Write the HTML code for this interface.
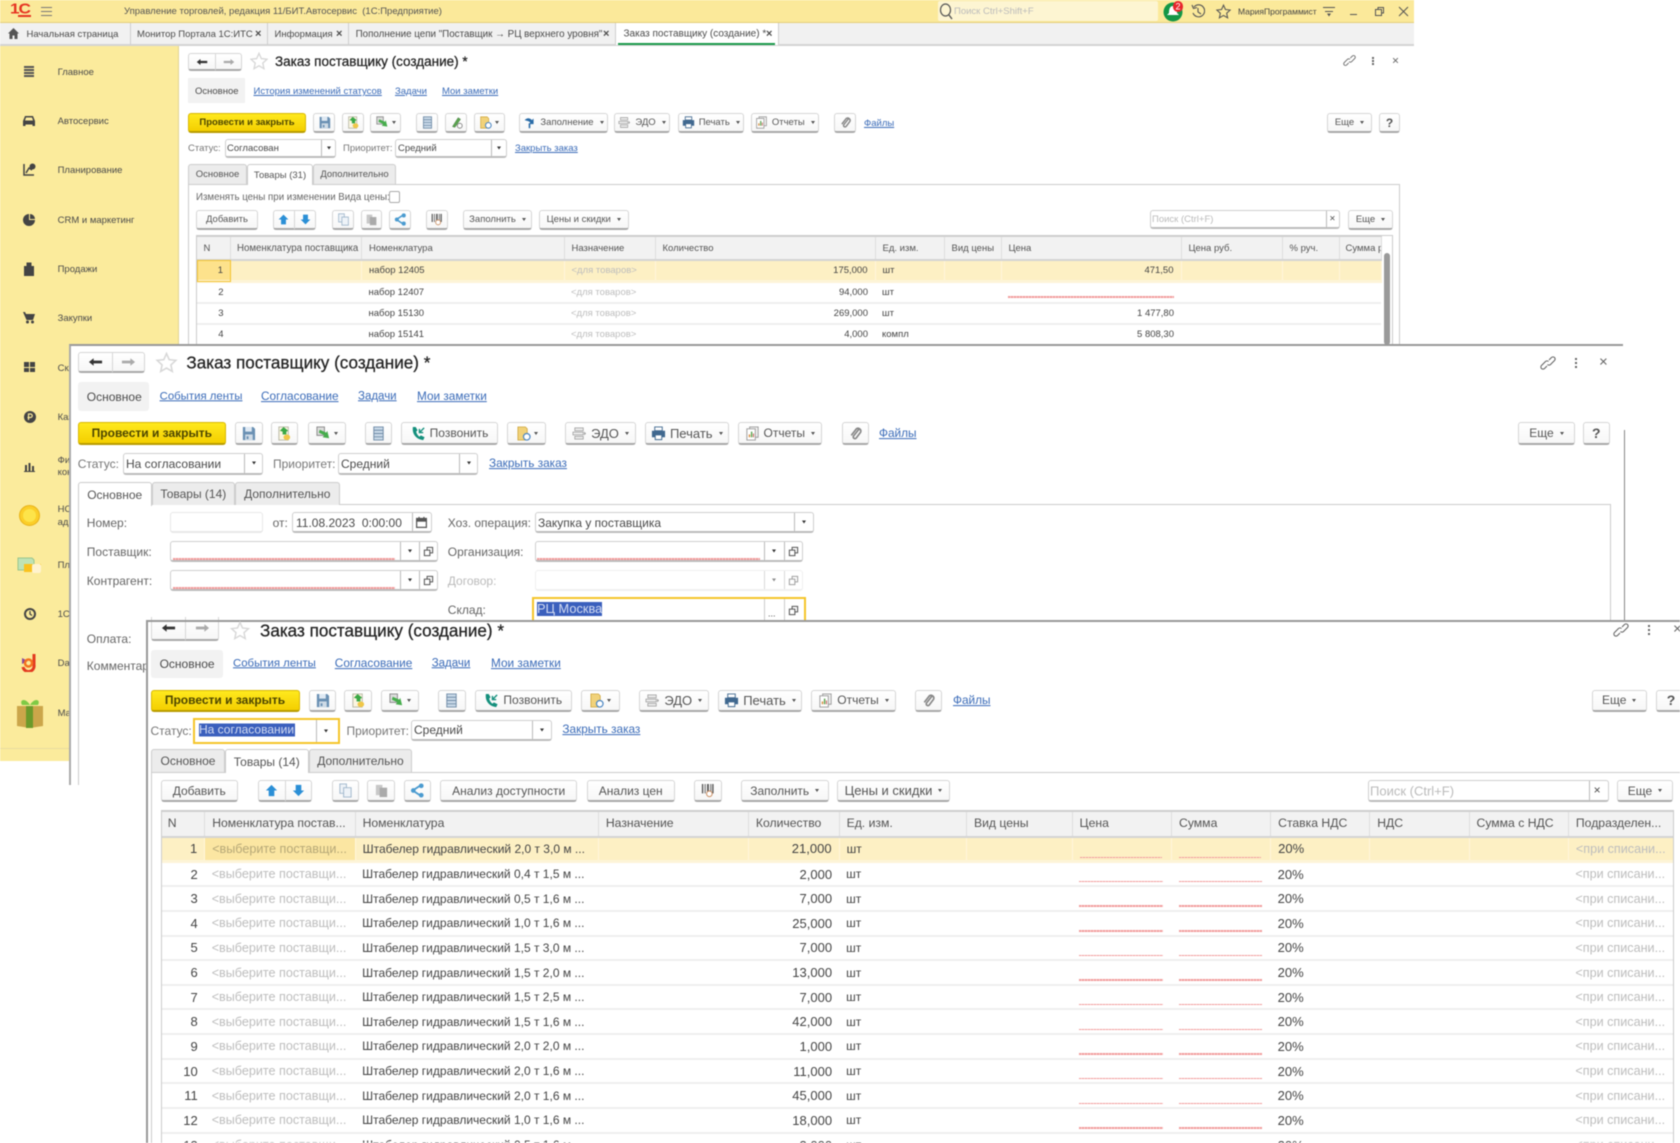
<!DOCTYPE html>
<html lang="ru"><head><meta charset="utf-8"><title>Заказ поставщику</title>
<style>
html,body{margin:0;padding:0;background:#fff}
body{width:1680px;height:1143px;overflow:hidden;position:relative;font-family:"Liberation Sans",Arial,sans-serif;color:#4b4b4b}
#p{position:absolute;left:0;top:0;width:1680px;height:1143px;overflow:hidden;filter:blur(.4px)}
.f1{font-size:9.5px}.f2,.f3{font-size:12px}
.x{position:absolute}
.t{position:absolute;white-space:nowrap;line-height:1;transform:translateY(-50%)}
.f1 .t{transform:translateY(calc(-50% + .7px))}
.l{color:#3a6bb8;text-decoration:underline}
.f2 .l,.f3 .l{font-size:11.8px}
.b{position:absolute;box-sizing:border-box;display:flex;align-items:center;justify-content:center;gap:4px;white-space:nowrap;background:linear-gradient(#fff,#f7f7f7);border:1px solid #d6d6d6;border-bottom:2px solid #a9a9a9;border-radius:3px;color:#555}
.y{background:linear-gradient(#ffe91e,#f4cf00);border-color:#d9b800;border-bottom-color:#b89c00;font-weight:bold;color:#4c4500}
.a{display:inline-block;width:0;height:0;border:2.5px solid transparent;border-top:3px solid #555;border-bottom:0;margin-left:2px}
.b svg{width:15px;height:15px;flex:none}
.f1 .b svg{width:13px;height:13px}
.n{position:absolute;box-sizing:border-box;background:#f2f2f2}
.g{position:absolute;box-sizing:border-box;display:flex;align-items:center;justify-content:center;white-space:nowrap}
.tg{background:#ececec;border:1px solid #ccc;border-bottom:0;border-radius:3px 3px 0 0;color:#555}
.tw{background:#fff;border:1px solid #ccc;border-bottom:0;border-radius:3px 3px 0 0;z-index:2;color:#555}
.i{position:absolute;box-sizing:border-box;background:#fff;border:1px solid #cfcfcf;border-bottom:2px solid #bdbdbd;border-radius:3px}
.s{position:absolute;top:0;bottom:0;width:1px;background:#bbb}
.o{position:absolute;width:0;height:0;border:2.5px solid transparent;border-top:3.5px solid #333;border-bottom:0;transform:translate(-50%,-50%);top:50%}
.rl{position:absolute;height:1.500px;background:repeating-linear-gradient(90deg,#f09a9a 0 2px,#f8c4c4 2px 3px)}
.w{left:7px;right:9px;bottom:3px}
.u .w{bottom:2px}
table{position:absolute;border-collapse:collapse;table-layout:fixed;color:#444}
td,th{padding:0 0 0 7px;overflow:hidden;white-space:nowrap;position:relative;box-sizing:border-box;font-weight:normal;text-align:left}
th{background:#f2f2f2;border-right:1px solid #ddd;border-bottom:2px solid #d4d4d4;border-top:2px solid #d0d0d0;color:#555}
.f3 th{padding-bottom:2px;font-size:12.200px}
td{border-bottom:2px solid #efefef}
.u td{background:#fdf0c4;border-right:1px solid #fff6dc;border-bottom:3px solid #fdf4d8}
td.q,td.m{text-align:right;padding:0 7px 0 0}
td.h{color:#bdbdbd}
.f3 td.h{font-size:12.600px}
.f3 td.q,.f3 td.m,.f3 td.p{font-size:13px}
.ic{position:absolute}
</style></head><body>
<svg width="0" height="0" style="position:absolute">
<symbol id="save" viewBox="0 0 16 16"><path d="M2 1h11l2 2v12H2z" fill="#6a90b3"/><path d="M4.500 1h7v5h-7z" fill="#dfe9f3"/><path d="M4.500 9h8v6h-8z" fill="#cfdbe6"/><path d="M6 11h2v3H6z" fill="#6a90b3"/></symbol>
<symbol id="doc" viewBox="0 0 16 16"><path d="M2 1h10v14H2z" fill="#fbf5e0" stroke="#b7b7a5"/><path d="M7 1l5 4-2 1v3H6V6L3 5z" fill="#39a845"/><ellipse cx="10.500" cy="12" rx="3.500" ry="3" fill="#f0c748"/></symbol>
<symbol id="gr" viewBox="0 0 16 16"><path d="M1 1h8v9H1z" fill="#dcdcdc" stroke="#888"/><path d="M4 4l7 3 1-2 2 8-7-1 2-2-6-3z" fill="#46ad4c"/></symbol>
<symbol id="list" viewBox="0 0 16 16"><path d="M3 1h10v14H3z" fill="#c9d9e8" stroke="#6f8ba6"/><path d="M3 4.500h10M3 8h10M3 11.500h10" stroke="#6f8ba6"/></symbol>
<symbol id="pen" viewBox="0 0 16 16"><path d="M3 13L10 2l3 2-7 10z" fill="#5aa34f" stroke="#3a6b35" stroke-width=".5"/><circle cx="12" cy="12" r="3" fill="#fff" stroke="#777"/></symbol>
<symbol id="dc" viewBox="0 0 16 16"><path d="M2 1h8l2 2v12H2z" fill="#f1d27a" stroke="#c69b2a" stroke-width=".7"/><circle cx="11.500" cy="11.500" r="3.500" fill="#fff" stroke="#4d87c2" stroke-width="1.300"/></symbol>
<symbol id="edo" viewBox="0 0 16 16"><path d="M3 2h9v3H3zM1 6.500h11v3H1zM3 11h9v3H3z" fill="#ececec" stroke="#9a9a9a" stroke-width=".8"/><path d="M13 6l2 2-2 2z" fill="#999"/></symbol>
<symbol id="prn" viewBox="0 0 16 16"><path d="M4 1h8v4H4z" fill="#fff" stroke="#40688f"/><path d="M1 5h14v7h-3v3H4v-3H1z" fill="#40688f"/><path d="M5 10h6v4H5z" fill="#fff"/></symbol>
<symbol id="rep" viewBox="0 0 16 16"><path d="M5 1h9v11H5z" fill="#f4f4f4" stroke="#999"/><path d="M2 3h9v12H2z" fill="#fff" stroke="#999"/><path d="M4 12V9h1.500v3z" fill="#d88a3a"/><path d="M6.300 12V6h1.500v6z" fill="#5aa34f"/><path d="M8.500 12V8h1v4z" fill="#c2534e"/></symbol>
<symbol id="clip" viewBox="0 0 16 16"><path d="M12 3L6 10.500a1.800 1.800 0 0 0 2.800 2.300L13.500 6.500A3 3 0 0 0 9 3L3.500 10" fill="none" stroke="#888" stroke-width="1.800"/></symbol>
<symbol id="fill" viewBox="0 0 16 16"><path d="M2 5c3-3 6-3 9 0l2-2v7H7l2-2C7 6 5 6 2 5z" fill="#2a6ca8"/><path d="M8 9v6" stroke="#2a6ca8" stroke-width="2"/></symbol>
<symbol id="ph" viewBox="0 0 16 16"><path d="M2 1c-1 7 3 13 11 14l1.500-3-4-2-1.500 1.500C7 10 6 8 5.500 6L7 4.500 5 1z" fill="#15907d"/><path d="M9 7l5-5M9 3v4h4" fill="none" stroke="#15907d" stroke-width="1.500"/></symbol>
<symbol id="up" viewBox="0 0 16 16"><path d="M8 2l6 6h-3v6H5V8H2z" fill="#2b8fd6"/></symbol>
<symbol id="dn" viewBox="0 0 16 16"><path d="M8 14l6-6h-3V2H5v6H2z" fill="#2b8fd6"/></symbol>
<symbol id="cp" viewBox="0 0 16 16"><path d="M2 1h7v10H2z" fill="#eef3f8" stroke="#9fb6cb"/><path d="M6 5h8v10H6z" fill="#eef3f8" stroke="#9fb6cb"/></symbol>
<symbol id="ps" viewBox="0 0 16 16"><path d="M2 2h7v11H2z" fill="#c8c8c8"/><path d="M6 5h8v10H6z" fill="#aaa"/></symbol>
<symbol id="sh" viewBox="0 0 16 16"><path d="M12 2L3 8l9 6" fill="none" stroke="#4b9bd0" stroke-width="2"/><circle cx="12" cy="3" r="2.500" fill="#4b9bd0"/><circle cx="3.500" cy="8" r="2.500" fill="#4b9bd0"/><circle cx="12" cy="13" r="2.500" fill="#4b9bd0"/></symbol>
<symbol id="bc" viewBox="0 0 16 16"><path d="M2 1h1.500v10H2zM5 1h1v10H5zM7.500 1h2v10h-2zM11 1h1v10h-1zM13 1h1.500v10H13z" fill="#5a5a5a"/><circle cx="10" cy="11.500" r="3" fill="#fff" stroke="#c98a5c"/></symbol>
<symbol id="ln" viewBox="0 0 16 16"><path d="M9 5l2.500-2.500a2.100 2.100 0 0 1 3 3L10.500 9.500a2.100 2.100 0 0 1-3 0M7 11l-2.500 2.500a2.100 2.100 0 0 1-3-3L5.500 6.500a2.100 2.100 0 0 1 3 0" fill="none" stroke="#666" stroke-width="1.100"/></symbol>
<symbol id="st" viewBox="0 0 20 20"><path d="M10 1.500l2.600 5.800 6.300.7-4.700 4.300 1.300 6.200L10 15.300l-5.500 3.200 1.300-6.200L1.100 8l6.300-.7z" fill="#fff" stroke="#d8d8d8" stroke-width="1.500"/></symbol>
<symbol id="bk" viewBox="0 0 16 10"><path d="M1 5l5-4v2.500h9v3H6V9z" fill="currentColor"/></symbol>
<symbol id="fw" viewBox="0 0 16 10"><path d="M15 5l-5-4v2.500H1v3h9V9z" fill="currentColor"/></symbol>
<symbol id="ow" viewBox="0 0 16 16"><path d="M6 2h8v8H6z" fill="none" stroke="#555" stroke-width="1.500"/><path d="M2 6h8v8H2z" fill="#fff" stroke="#555" stroke-width="1.500"/></symbol>
<symbol id="cal" viewBox="0 0 16 16"><path d="M2 3h12v11H2z" fill="#fff" stroke="#555" stroke-width="1.500"/><path d="M2 3h12v4H2z" fill="#555"/><path d="M5 1v3M11 1v3" stroke="#555" stroke-width="1.500"/></symbol>
</svg>
<div id="p">

<!-- WINDOW 1 -->
<div class="f1">
<div class="x" style="left:0;top:0;width:1414px;height:23px;background:#fbe99a;border-bottom:1px solid #e4cf7a;box-sizing:border-box"></div>
<span class="t" style="left:10px;top:8.500px;color:#e63422;font:bold 15px 'Liberation Sans',sans-serif;letter-spacing:-1px;transform:translateY(-50%) scaleX(1.15);transform-origin:left">1С</span>
<div class="x" style="left:18px;top:14.500px;width:13px;height:2px;background:#e63422"></div>
<div class="x" style="left:41px;top:7px;width:11px;height:9px;border-top:1px solid #777;border-bottom:1px solid #777;box-sizing:border-box"></div><div class="x" style="left:41px;top:11px;width:11px;height:1px;background:#777"></div>
<span class="t" style="left:124px;top:10.500px;color:#555">Управление торговлей, редакция 11/БИТ.Автосервис &nbsp;(1С:Предприятие)</span>
<div class="x" style="left:938px;top:1px;width:220px;height:20px;background:#fdf5d2;border-radius:2px"></div>
<svg class="ic" style="left:939px;top:3px" width="14" height="17" viewBox="0 0 14 17"><ellipse cx="6.500" cy="7" rx="5" ry="6" fill="none" stroke="#555" stroke-width="1.200"/><path d="M10 12l3 4" stroke="#555" stroke-width="1.400"/></svg>
<span class="t" style="left:954px;top:10.500px;color:#bbb">Поиск Ctrl+Shift+F</span>
<svg class="ic" style="left:1163px;top:0" width="22" height="22" viewBox="0 0 22 22"><circle cx="10" cy="12" r="9.500" fill="#149746"/><path d="M10 6c3 0 4 3 4 7l2 2H4l2-2c0-4 1-7 4-7z" fill="#fff"/><rect x="10" y="1" width="10" height="11" rx="5" fill="#e8262c"/><text x="15" y="9.500" font-size="9" fill="#fff" text-anchor="middle" font-family="Liberation Sans">2</text></svg>
<svg class="ic" style="left:1191px;top:4px" width="14" height="15" viewBox="0 0 14 15"><path d="M3 3a6 6 0 1 1-1 6M1 1l1.500 3.500L6 3.500M7 4v4l3 2" fill="none" stroke="#555" stroke-width="1.100"/></svg>
<svg class="ic" style="left:1216px;top:4px" width="15" height="15" viewBox="0 0 20 20"><path d="M10 1.500l2.600 5.800 6.300.7-4.700 4.300 1.300 6.200L10 15.300l-5.500 3.200 1.300-6.200L1.100 8l6.300-.7z" fill="none" stroke="#555" stroke-width="1.400"/></svg>
<span class="t" style="left:1238px;top:10.500px;font-size:8.500px;color:#444">МарияПрограммист</span>
<div class="x" style="left:1323px;top:7px;width:12px;height:1px;background:#555"></div><div class="x" style="left:1325px;top:11px;width:8px;height:1px;background:#555"></div><div class="o" style="left:1329px;top:15px;border-top-color:#555"></div>
<div class="x" style="left:1350px;top:14px;width:7px;height:1px;background:#555"></div>
<svg class="ic" style="left:1375px;top:7px" width="9" height="9" viewBox="0 0 9 9"><path d="M3 2V.5h5.500V6H7M.5 2.500H6.500V8.500H.5z" fill="none" stroke="#555"/></svg>
<svg class="ic" style="left:1398px;top:6px" width="11" height="11" viewBox="0 0 11 11"><path d="M1 1l9 9M10 1l-9 9" stroke="#555" stroke-width="1"/></svg>

<div class="x" style="left:0;top:23px;width:1414px;height:23px;background:#f1f1f1;border-bottom:2px solid #d4d4d4;box-sizing:border-box"></div>
<div class="x" style="left:615px;top:23px;width:163px;height:22px;background:#fff"></div>
<div class="x" style="left:618px;top:43px;width:157px;height:2px;background:#1b9a4b"></div>
<div class="x" style="left:130px;top:23px;width:1px;height:22px;background:#cfcfcf"></div>
<div class="x" style="left:267px;top:23px;width:1px;height:22px;background:#cfcfcf"></div>
<div class="x" style="left:348px;top:23px;width:1px;height:22px;background:#cfcfcf"></div>
<div class="x" style="left:615px;top:23px;width:1px;height:22px;background:#cfcfcf"></div>
<div class="x" style="left:778px;top:23px;width:1px;height:22px;background:#cfcfcf"></div>
<svg class="ic" style="left:8px;top:28px" width="11" height="11" viewBox="0 0 11 11"><path d="M5.500 0L11 5.500H9.500V11H6.500V7.500h-2V11H1.500V5.500H0z" fill="#555"/></svg>
<span class="t" style="left:26.500px;top:33.500px">Начальная страница</span>
<span class="t" style="left:137px;top:33.500px">Монитор Портала 1С:ИТС</span><span class="t" style="left:255px;top:33.500px;font-weight:bold;font-size:11px">×</span>
<span class="t" style="left:274.500px;top:33.500px">Информация</span><span class="t" style="left:336px;top:33.500px;font-weight:bold;font-size:11px">×</span>
<span class="t" style="left:355.600px;top:33.500px;font-size:9.800px">Пополнение цепи "Поставщик → РЦ верхнего уровня"</span><span class="t" style="left:603px;top:33.500px;font-weight:bold;font-size:11px">×</span>
<span class="t" style="left:623.500px;top:33.500px;font-size:10px">Заказ поставщику (создание) *</span><span class="t" style="left:766px;top:33.500px;font-weight:bold;font-size:11px">×</span>

<div class="x" style="left:0;top:46px;width:178px;height:715px;background:#fbeb9c;border-right:1px solid #e2d596"></div>
<div class="x" style="left:0;top:748px;width:178px;height:1px;background:#e9dca0"></div>

<div class="x" style="left:24px;top:66px;width:10px;height:2px;background:#555;box-shadow:0 3px 0 #555,0 6px 0 #555,0 9px 0 #555"></div>
<svg class="ic" style="left:23px;top:115px" width="12" height="12" viewBox="0 0 12 12"><path d="M2 1h8l2 5v5H9.500V9.500h-7V11H0V6z" fill="#444"/><path d="M3 2.500h6l1 3H2z" fill="#fbeb9c"/></svg>
<svg class="ic" style="left:23px;top:163px" width="13" height="14" viewBox="0 0 13 14"><path d="M1 1v11h10M3 10l3-5 3 2" fill="none" stroke="#444" stroke-width="1.500"/><circle cx="9.500" cy="3.500" r="3" fill="#444"/></svg>
<svg class="ic" style="left:23px;top:214px" width="12" height="12" viewBox="0 0 12 12"><path d="M6 0a6 6 0 1 0 6 6H6z" fill="#444"/><path d="M7 0v5h5a5 5 0 0 0-5-5z" fill="#444"/></svg>
<svg class="ic" style="left:24px;top:262px" width="10" height="14" viewBox="0 0 10 14"><path d="M0 4h10v10H0zM3 4V1h4v3" fill="#444"/><path d="M3 4V1h4v3" fill="none" stroke="#444"/></svg>
<svg class="ic" style="left:23px;top:312px" width="12" height="12" viewBox="0 0 12 12"><path d="M0 0h2l1 2h9l-2 6H3.500zM3 10a1.500 1.500 0 1 0 3 0 1.500 1.500 0 0 0-3 0zM8 10a1.500 1.500 0 1 0 3 0 1.500 1.500 0 0 0-3 0z" fill="#444"/></svg>
<svg class="ic" style="left:24px;top:362px" width="11" height="11" viewBox="0 0 11 11"><path d="M0 0h5v5H0zM6 0h5v5H6zM0 6h5v4H0zM6 6h5v4H6z" fill="#444"/></svg>
<svg class="ic" style="left:23.500px;top:411px" width="12" height="12" viewBox="0 0 12 12"><circle cx="6" cy="6" r="6" fill="#444"/><path d="M4.500 9V3h2a1.500 1.500 0 0 1 0 3.500h-3" fill="none" stroke="#fbeb9c" stroke-width="1.200"/></svg>
<svg class="ic" style="left:24px;top:461px" width="11" height="11" viewBox="0 0 11 11"><path d="M1 4h2v6H1zM4.500 2h2v8h-2zM8 5h2v5H8zM0 10h11v1H0z" fill="#444"/></svg>
<svg class="ic" style="left:19px;top:505px" width="21" height="21" viewBox="0 0 21 21"><circle cx="10.500" cy="10.500" r="10" fill="#fbce29" stroke="#e8b218"/><circle cx="10.500" cy="10.500" r="6.500" fill="#fde44a"/></svg>
<svg class="ic" style="left:17px;top:557px" width="25" height="16" viewBox="0 0 25 16"><path d="M1 1h14l2 2v10H1z" fill="#bfe3b4" stroke="#9ac58e"/><path d="M7 7h17v8H7z" fill="#f9c21e"/><rect x="15" y="7" width="9" height="9" rx="2" fill="#fff3cf"/></svg>
<svg class="ic" style="left:23.500px;top:608px" width="12" height="12" viewBox="0 0 12 12"><circle cx="6" cy="6" r="5" fill="none" stroke="#444" stroke-width="2"/><path d="M6 3v3l2 1.500" stroke="#444" fill="none" stroke-width="1.300"/></svg>
<svg class="ic" style="left:20px;top:653px" width="19" height="19" viewBox="0 0 19 19"><path d="M14 1v11a5.500 5.500 0 0 1-11 2" fill="none" stroke="#e33a20" stroke-width="3"/><path d="M2 5l6 3-6 3z" fill="#8a4a9d"/><circle cx="8.500" cy="10" r="3.500" fill="none" stroke="#f4711f" stroke-width="2.500"/></svg>
<svg class="ic" style="left:14px;top:696px" width="32" height="32" viewBox="0 0 32 32"><path d="M3 10h26v20l-13 2-13-2z" fill="#cba64a"/><path d="M12 10h7v22h-7z" fill="#6b9a2a"/><path d="M16 9C11 1 5 4 8 9zM16 9c5-8 11-5 8 0z" fill="#7fca45"/></svg>

<span class="t" style="left:57.600px;top:71.700px">Главное</span>
<span class="t" style="left:57.600px;top:121px">Автосервис</span>
<span class="t" style="left:57.600px;top:170px">Планирование</span>
<span class="t" style="left:57.600px;top:220px">CRM и маркетинг</span>
<span class="t" style="left:57.600px;top:269px">Продажи</span>
<span class="t" style="left:57.600px;top:318px">Закупки</span>
<span class="t" style="left:57.600px;top:367.500px">Склад</span>
<span class="t" style="left:57.600px;top:417px">Казна</span>
<span class="t" style="left:57.600px;top:460px">Финансы</span><span class="t" style="left:57.600px;top:472px">контроль</span>
<span class="t" style="left:57.600px;top:509px">НСИ и</span><span class="t" style="left:57.600px;top:522px">адм</span>
<span class="t" style="left:57.600px;top:565px">План</span>
<span class="t" style="left:57.600px;top:614px">1С</span>
<span class="t" style="left:57.600px;top:663px">Da</span>
<span class="t" style="left:57.600px;top:713px">Ma</span>

<!-- w1 form -->
<div class="b" style="left:188px;top:53px;width:28px;height:18px;border-radius:3px 0 0 3px;color:#333"><svg style="width:12px;height:8px"><use href="#bk"/></svg></div>
<div class="b" style="left:215px;top:53px;width:27px;height:18px;border-radius:0 3px 3px 0;color:#aaa"><svg style="width:12px;height:8px"><use href="#fw"/></svg></div>
<svg class="ic" style="left:250px;top:52px" width="18" height="18"><use href="#st"/></svg>
<span class="t" style="left:275px;top:61px;font-size:13.500px;color:#222;-webkit-text-stroke:.25px #222">Заказ поставщику (создание) *</span>
<svg class="ic" style="left:1343px;top:54px" width="13" height="13"><use href="#ln"/></svg>
<div class="x" style="left:1372px;top:57px;width:2px;height:2px;background:#666;box-shadow:0 3px 0 #666,0 6px 0 #666"></div>
<span class="t" style="left:1392px;top:60px;font-size:12px;color:#666">×</span>

<div class="n" style="left:188px;top:78px;width:57px;height:25px"></div>
<span class="t" style="left:195px;top:91px">Основное</span>
<a class="t l" style="left:253.500px;top:91px">История изменений статусов</a>
<a class="t l" style="left:395px;top:91px">Задачи</a>
<a class="t l" style="left:442px;top:91px">Мои заметки</a>

<div class="b y" style="left:188px;top:113px;width:118px;height:20px">Провести и закрыть</div>
<div class="b" style="left:313px;top:113px;width:22px;height:20px"><svg><use href="#save"/></svg></div>
<div class="b" style="left:342px;top:113px;width:22px;height:20px"><svg><use href="#doc"/></svg></div>
<div class="b" style="left:370px;top:113px;width:31px;height:20px;gap:1px"><svg><use href="#gr"/></svg><i class="a"></i></div>
<div class="b" style="left:416px;top:113px;width:22px;height:20px"><svg><use href="#list"/></svg></div>
<div class="b" style="left:445px;top:113px;width:22px;height:20px"><svg><use href="#pen"/></svg></div>
<div class="b" style="left:473.500px;top:113px;width:31.500px;height:20px;gap:1px"><svg><use href="#dc"/></svg><i class="a"></i></div>
<div class="b" style="left:519px;top:113px;width:89px;height:20px"><svg><use href="#fill"/></svg>Заполнение<i class="a"></i></div>
<div class="b" style="left:614px;top:113px;width:56px;height:20px"><svg><use href="#edo"/></svg>ЭДО<i class="a"></i></div>
<div class="b" style="left:677.500px;top:113px;width:66.500px;height:20px"><svg><use href="#prn"/></svg>Печать<i class="a"></i></div>
<div class="b" style="left:751px;top:113px;width:67.500px;height:20px"><svg><use href="#rep"/></svg>Отчеты<i class="a"></i></div>
<div class="b" style="left:834px;top:113px;width:22px;height:20px"><svg><use href="#clip"/></svg></div>
<a class="t l" style="left:864px;top:123px">Файлы</a>
<div class="b" style="left:1327px;top:113px;width:45px;height:20px">Еще<i class="a"></i></div>
<div class="b" style="left:1379px;top:113px;width:21px;height:20px;font-weight:bold;font-size:12px">?</div>

<span class="t" style="left:188px;top:148px;color:#777">Статус:</span>
<div class="i" style="left:224.500px;top:139px;width:111.500px;height:19px"><span class="s" style="left:95px"></span><i class="o" style="left:103px"></i></div>
<span class="t" style="left:227px;top:148px">Согласован</span>
<span class="t" style="left:343px;top:148px;color:#777">Приоритет:</span>
<div class="i" style="left:395px;top:139px;width:111.500px;height:19px"><span class="s" style="left:95px"></span><i class="o" style="left:103px"></i></div>
<span class="t" style="left:398px;top:148px">Средний</span>
<a class="t l" style="left:515px;top:148px">Закрыть заказ</a>

<div class="x" style="left:188px;top:184px;width:1212px;height:170px;border:1px solid #ccc;box-sizing:border-box"></div>
<div class="g tg" style="left:188px;top:164px;width:59px;height:20px">Основное</div>
<div class="g tw" style="left:247px;top:164px;width:66px;height:21px">Товары (31)</div>
<div class="g tg" style="left:313px;top:164px;width:83px;height:20px">Дополнительно</div>
<span class="t" style="left:196px;top:197px;color:#666;font-size:9.700px">Изменять цены при изменении Вида цены:</span>
<div class="x" style="left:389px;top:191px;width:11px;height:12px;border:1px solid #aaa;border-radius:2px;box-sizing:border-box;background:#fff"></div>

<div class="b" style="left:196px;top:210px;width:62px;height:20px">Добавить</div>
<div class="b" style="left:272.500px;top:210px;width:22.500px;height:20px;border-radius:3px 0 0 3px"><svg><use href="#up"/></svg></div>
<div class="b" style="left:294px;top:210px;width:22px;height:20px;border-radius:0 3px 3px 0"><svg><use href="#dn"/></svg></div>
<div class="b" style="left:332px;top:210px;width:22px;height:20px"><svg><use href="#cp"/></svg></div>
<div class="b" style="left:361px;top:210px;width:21px;height:20px"><svg><use href="#ps"/></svg></div>
<div class="b" style="left:389px;top:210px;width:22px;height:20px"><svg><use href="#sh"/></svg></div>
<div class="b" style="left:426px;top:210px;width:21.500px;height:20px"><svg><use href="#bc"/></svg></div>
<div class="b" style="left:463px;top:210px;width:69px;height:20px">Заполнить<i class="a"></i></div>
<div class="b" style="left:539px;top:210px;width:89.500px;height:20px">Цены и скидки<i class="a"></i></div>
<div class="i" style="left:1149.500px;top:210px;width:190.500px;height:19px"><span class="s" style="left:175px"></span><span class="t" style="left:179px;top:8px;font-size:10px">×</span></div>
<span class="t" style="left:1152px;top:219px;color:#bbb">Поиск (Ctrl+F)</span>
<div class="b" style="left:1348px;top:210px;width:45px;height:20px">Еще<i class="a"></i></div>

<table style="left:196.500px;top:235px;width:1184.500px">
<colgroup><col style="width:34px"><col style="width:131px"><col style="width:202.500px"><col style="width:91px"><col style="width:220px"><col style="width:69px"><col style="width:57px"><col style="width:180px"><col style="width:101px"><col style="width:57px"><col style="width:42px"></colgroup>
<tr style="height:24.300px"><th>N</th><th style="font-size:9.700px;padding-left:6px">Номенклатура поставщика</th><th>Номенклатура</th><th>Назначение</th><th>Количество</th><th>Ед. изм.</th><th>Вид цены</th><th>Цена</th><th>Цена руб.</th><th>% руч.</th><th style="padding-left:6px">Сумма р</th></tr>
<tr class="u" style="height:21.300px"><td class="m" style="background:#fde28c;outline:1.500px solid #f3c330;outline-offset:-1.500px">1</td><td></td><td>набор 12405</td><td class="h">&lt;для товаров&gt;</td><td class="q">175,000</td><td>шт</td><td></td><td class="q">471,50</td><td></td><td></td><td></td></tr>
<tr style="height:21.300px"><td class="m">2</td><td></td><td>набор 12407</td><td class="h">&lt;для товаров&gt;</td><td class="q">94,000</td><td>шт</td><td></td><td><i class="rl" style="left:7px;right:7px;bottom:4px"></i></td><td></td><td></td><td></td></tr>
<tr style="height:21.300px"><td class="m">3</td><td></td><td>набор 15130</td><td class="h">&lt;для товаров&gt;</td><td class="q">269,000</td><td>шт</td><td></td><td class="q">1 477,80</td><td></td><td></td><td></td></tr>
<tr style="height:21.300px"><td class="m">4</td><td></td><td>набор 15141</td><td class="h">&lt;для товаров&gt;</td><td class="q">4,000</td><td>компл</td><td></td><td class="q">5 808,30</td><td></td><td></td><td></td></tr>
</table>
<div class="x" style="left:196px;top:235px;width:1197px;height:120px;border:1px solid #ccc;box-sizing:border-box"></div>
<div class="x" style="left:1384px;top:253px;width:6px;height:92px;background:#9a9a9a;border-radius:3px"></div>
</div>

<!-- WINDOW 2 -->
<div class="x" style="left:69px;top:344px;width:1554px;height:441px;background:#fff;border-top:2px solid #999;border-left:2px solid #aaa;box-sizing:border-box"></div>
<div class="x" style="left:1624px;top:430px;width:1px;height:191px;background:#888"></div>
<div class="f2">
<div class="b" style="left:78px;top:352px;width:35px;height:21px;border-radius:3px 0 0 3px;color:#333"><svg style="width:15px;height:10px"><use href="#bk"/></svg></div>
<div class="b" style="left:112px;top:352px;width:33px;height:21px;border-radius:0 3px 3px 0;color:#aaa"><svg style="width:15px;height:10px"><use href="#fw"/></svg></div>
<svg class="ic" style="left:155px;top:352px" width="23" height="21"><use href="#st"/></svg>
<span class="t" style="left:186.400px;top:363px;font-size:17.100px;color:#222;-webkit-text-stroke:.25px #222">Заказ поставщику (создание) *</span>
<svg class="ic" style="left:1540px;top:355px" width="16" height="16"><use href="#ln"/></svg>
<div class="x" style="left:1575px;top:358px;width:2px;height:2px;background:#666;box-shadow:0 4px 0 #666,0 8px 0 #666"></div>
<span class="t" style="left:1599px;top:362px;font-size:15px;color:#666">×</span>

<div class="n" style="left:77.700px;top:382px;width:71.700px;height:29px;border-radius:3px"></div>
<span class="t" style="left:86.800px;top:397px">Основное</span>
<a class="t l" style="left:159.600px;top:397px;font-size:11.400px">События ленты</a>
<a class="t l" style="left:261px;top:397px">Согласование</a>
<a class="t l" style="left:358px;top:397px;font-size:11.500px">Задачи</a>
<a class="t l" style="left:417px;top:397px">Мои заметки</a>

<div class="b y" style="left:77.700px;top:422px;width:148.300px;height:23px">Провести и закрыть</div>
<div class="b" style="left:235px;top:422px;width:27.500px;height:23px"><svg><use href="#save"/></svg></div>
<div class="b" style="left:271px;top:422px;width:27px;height:23px"><svg><use href="#doc"/></svg></div>
<div class="b" style="left:307.500px;top:422px;width:38px;height:23px;gap:1px"><svg><use href="#gr"/></svg><i class="a"></i></div>
<div class="b" style="left:365px;top:422px;width:27px;height:23px"><svg><use href="#list"/></svg></div>
<div class="b" style="left:401px;top:422px;width:97px;height:23px"><svg><use href="#ph"/></svg>Позвонить</div>
<div class="b" style="left:507px;top:422px;width:39px;height:23px;gap:1px"><svg><use href="#dc"/></svg><i class="a"></i></div>
<div class="b" style="left:565px;top:422px;width:71px;height:23px;font-size:13px"><svg><use href="#edo"/></svg>ЭДО<i class="a"></i></div>
<div class="b" style="left:645px;top:422px;width:83.500px;height:23px;font-size:13px"><svg><use href="#prn"/></svg>Печать<i class="a"></i></div>
<div class="b" style="left:737.500px;top:422px;width:84.500px;height:23px"><svg><use href="#rep"/></svg>Отчеты<i class="a"></i></div>
<div class="b" style="left:842px;top:422px;width:27px;height:23px"><svg><use href="#clip"/></svg></div>
<a class="t l" style="left:879px;top:434px">Файлы</a>
<div class="b" style="left:1518px;top:422px;width:57px;height:23px">Еще<i class="a"></i></div>
<div class="b" style="left:1582.500px;top:422px;width:27.500px;height:23px;font-weight:bold;font-size:14px">?</div>

<span class="t" style="left:77.700px;top:464px;color:#777">Статус:</span>
<div class="i" style="left:122.600px;top:453px;width:140.400px;height:21.500px"><span class="s" style="left:120px"></span><i class="o" style="left:130px"></i></div>
<span class="t" style="left:126px;top:463.500px">На согласовании</span>
<span class="t" style="left:273px;top:464px;color:#777">Приоритет:</span>
<div class="i" style="left:338px;top:453px;width:140px;height:21.500px"><span class="s" style="left:120px"></span><i class="o" style="left:130px"></i></div>
<span class="t" style="left:341px;top:463.500px">Средний</span>
<a class="t l" style="left:489px;top:464px">Закрыть заказ</a>

<div class="x" style="left:78px;top:504px;width:1533px;height:281px;border:1px solid #ccc;border-bottom:0;box-sizing:border-box"></div>
<div class="g tw" style="left:77.700px;top:482px;width:74px;height:24px">Основное</div>
<div class="g tg" style="left:151.600px;top:482px;width:83.400px;height:23px">Товары (14)</div>
<div class="g tg" style="left:235px;top:482px;width:104.600px;height:23px">Дополнительно</div>

<span class="t" style="left:86.800px;top:522.700px;color:#666">Номер:</span>
<div class="i" style="left:169.800px;top:512.300px;width:93.200px;height:21px;border-color:#e8e8e8"></div>
<span class="t" style="left:272.600px;top:522.700px;color:#666">от:</span>
<div class="i" style="left:292.400px;top:512.300px;width:139.600px;height:21px"><span class="s" style="left:119px"></span><svg class="ic" style="left:122px;top:3px" width="13" height="13"><use href="#cal"/></svg></div>
<span class="t" style="left:296px;top:522.700px">11.08.2023 &nbsp;0:00:00</span>
<span class="t" style="left:447.800px;top:522.700px;color:#666">Хоз. операция:</span>
<div class="i" style="left:534.500px;top:512.300px;width:279px;height:21px"><span class="s" style="left:258px"></span><i class="o" style="left:268px"></i></div>
<span class="t" style="left:538px;top:522.700px">Закупка у поставщика</span>

<span class="t" style="left:86.800px;top:551.700px;color:#666">Поставщик:</span>
<div class="i" style="left:169.800px;top:541.300px;width:268.200px;height:21px"><span class="s" style="left:229px"></span><span class="s" style="left:248px"></span><i class="o" style="left:239px"></i><svg class="ic" style="left:252px;top:4px" width="11" height="11"><use href="#ow"/></svg></div>
<i class="rl" style="left:173px;top:558px;width:222px"></i>
<span class="t" style="left:447.800px;top:551.700px;color:#666">Организация:</span>
<div class="i" style="left:534.500px;top:541.300px;width:268px;height:21px"><span class="s" style="left:228px"></span><span class="s" style="left:248px"></span><i class="o" style="left:238px"></i><svg class="ic" style="left:252px;top:4px" width="11" height="11"><use href="#ow"/></svg></div>
<i class="rl" style="left:537px;top:558px;width:222.500px"></i>

<span class="t" style="left:86.800px;top:580.700px;color:#666">Контрагент:</span>
<div class="i" style="left:169.800px;top:570.300px;width:268.200px;height:21px"><span class="s" style="left:229px"></span><span class="s" style="left:248px"></span><i class="o" style="left:239px"></i><svg class="ic" style="left:252px;top:4px" width="11" height="11"><use href="#ow"/></svg></div>
<i class="rl" style="left:173px;top:587px;width:222px"></i>
<span class="t" style="left:447.800px;top:580.700px;color:#bbb">Договор:</span>
<div class="i" style="left:534.500px;top:570.300px;width:268px;height:21px;border-color:#e4e4e4;opacity:.55"><span class="s" style="left:228px"></span><span class="s" style="left:248px"></span><i class="o" style="left:238px"></i><svg class="ic" style="left:252px;top:4px" width="11" height="11"><use href="#ow"/></svg></div>

<span class="t" style="left:447.800px;top:609.700px;color:#666">Склад:</span>
<div class="x" style="left:532px;top:596.700px;width:274px;height:30px;border:2px solid #f5c52a;background:#fff;box-sizing:border-box"><span class="s" style="left:230px;background:#ccc"></span><span class="s" style="left:250px;background:#ccc"></span><span class="t" style="left:234px;top:15px;font-size:9px">...</span><svg class="ic" style="left:254px;top:6px" width="11" height="11"><use href="#ow"/></svg></div>
<span class="t" style="left:537px;top:609px;background:#3a5fbd;color:#d4dcf2;padding:1px 0;line-height:12px;font-size:12.800px">РЦ Москва</span>
<span class="t" style="left:86.800px;top:639px;color:#666">Оплата:</span>
<span class="t" style="left:86.800px;top:665.700px;color:#666">Комментарий:</span>
</div>

<!-- WINDOW 3 -->
<div class="x" style="left:146px;top:620px;width:1540px;height:530px;background:#fff;border-top:2px solid #999;border-left:2px solid #999;box-sizing:border-box"></div>
<div class="f3">
<div class="b" style="left:151px;top:617px;width:35px;height:24px;border-radius:0 0 0 3px;color:#333;border-top:0"><svg style="width:15px;height:10px"><use href="#bk"/></svg></div>
<div class="b" style="left:185px;top:617px;width:34px;height:24px;border-radius:0 0 3px 0;color:#aaa;border-top:0"><svg style="width:15px;height:10px"><use href="#fw"/></svg></div>
<div class="x" style="left:146px;top:620px;width:1534px;height:2px;background:#999"></div>
<svg class="ic" style="left:229px;top:621px" width="22" height="19"><use href="#st"/></svg>
<span class="t" style="left:260px;top:630.500px;font-size:17.100px;color:#222;-webkit-text-stroke:.25px #222">Заказ поставщику (создание) *</span>
<svg class="ic" style="left:1613px;top:622px" width="16" height="16"><use href="#ln"/></svg>
<div class="x" style="left:1648px;top:625px;width:2px;height:2px;background:#666;box-shadow:0 4px 0 #666,0 8px 0 #666"></div>
<span class="t" style="left:1673px;top:629px;font-size:15px;color:#666">×</span>

<div class="n" style="left:150.500px;top:650px;width:72.300px;height:28px;border-radius:3px"></div>
<span class="t" style="left:159.600px;top:664.200px">Основное</span>
<a class="t l" style="left:233px;top:664.200px;font-size:11.400px">События ленты</a>
<a class="t l" style="left:334.800px;top:664.200px">Согласование</a>
<a class="t l" style="left:431.700px;top:664.200px;font-size:11.500px">Задачи</a>
<a class="t l" style="left:491px;top:664.200px">Мои заметки</a>

<div class="b y" style="left:150.500px;top:689.700px;width:149px;height:22.300px">Провести и закрыть</div>
<div class="b" style="left:308.500px;top:689.700px;width:27.500px;height:22.300px"><svg><use href="#save"/></svg></div>
<div class="b" style="left:344.400px;top:689.700px;width:27.300px;height:22.300px"><svg><use href="#doc"/></svg></div>
<div class="b" style="left:380.800px;top:689.700px;width:38px;height:22.300px;gap:1px"><svg><use href="#gr"/></svg><i class="a"></i></div>
<div class="b" style="left:438px;top:689.700px;width:27.500px;height:22.300px"><svg><use href="#list"/></svg></div>
<div class="b" style="left:474.500px;top:689.700px;width:97.500px;height:22.300px"><svg><use href="#ph"/></svg>Позвонить</div>
<div class="b" style="left:581px;top:689.700px;width:38.700px;height:22.300px;gap:1px"><svg><use href="#dc"/></svg><i class="a"></i></div>
<div class="b" style="left:638.500px;top:689.700px;width:70.500px;height:22.300px;font-size:13px"><svg><use href="#edo"/></svg>ЭДО<i class="a"></i></div>
<div class="b" style="left:718px;top:689.700px;width:84px;height:22.300px;font-size:13px"><svg><use href="#prn"/></svg>Печать<i class="a"></i></div>
<div class="b" style="left:811px;top:689.700px;width:85px;height:22.300px"><svg><use href="#rep"/></svg>Отчеты<i class="a"></i></div>
<div class="b" style="left:915px;top:689.700px;width:27px;height:22.300px"><svg><use href="#clip"/></svg></div>
<a class="t l" style="left:953px;top:701px">Файлы</a>
<div class="b" style="left:1591.500px;top:689.700px;width:55.500px;height:22.300px">Еще<i class="a"></i></div>
<div class="b" style="left:1656px;top:689.700px;width:30px;height:22.300px;font-weight:bold;font-size:14px">?</div>

<span class="t" style="left:150.500px;top:730.700px;color:#777">Статус:</span>
<div class="x" style="left:193.400px;top:718px;width:146.200px;height:25.500px;border:2px solid #f5c52a;box-sizing:border-box;background:#fff"><span class="s" style="left:121px;background:#bbb"></span><i class="o" style="left:131px"></i></div>
<span class="t" style="left:199px;top:730.300px;background:#3a5fbd;color:#d4dcf2;line-height:13px;width:96px">На согласовании</span>
<span class="t" style="left:346.500px;top:730.700px;color:#777">Приоритет:</span>
<div class="i" style="left:411px;top:720.300px;width:140.700px;height:21px"><span class="s" style="left:120px"></span><i class="o" style="left:130px"></i></div>
<span class="t" style="left:414px;top:730.300px">Средний</span>
<a class="t l" style="left:562.400px;top:730.300px">Закрыть заказ</a>

<div class="x" style="left:151px;top:771.500px;width:1540px;height:400px;border:1px solid #ccc;box-sizing:border-box"></div>
<div class="g tg" style="left:151px;top:749px;width:74px;height:23px">Основное</div>
<div class="g tw" style="left:225px;top:749px;width:83.500px;height:24px">Товары (14)</div>
<div class="g tg" style="left:308.500px;top:749px;width:103.900px;height:23px">Дополнительно</div>

<div class="b" style="left:160.700px;top:780px;width:77.100px;height:22.300px">Добавить</div>
<div class="b" style="left:257.600px;top:780px;width:28px;height:22.300px;border-radius:3px 0 0 3px"><svg><use href="#up"/></svg></div>
<div class="b" style="left:284.600px;top:780px;width:27.700px;height:22.300px;border-radius:0 3px 3px 0"><svg><use href="#dn"/></svg></div>
<div class="b" style="left:331.500px;top:780px;width:27.500px;height:22.300px"><svg><use href="#cp"/></svg></div>
<div class="b" style="left:367.400px;top:780px;width:27.400px;height:22.300px"><svg><use href="#ps"/></svg></div>
<div class="b" style="left:404.400px;top:780px;width:26.600px;height:22.300px"><svg><use href="#sh"/></svg></div>
<div class="b" style="left:440px;top:780px;width:137.400px;height:22.300px">Анализ доступности</div>
<div class="b" style="left:586.500px;top:780px;width:88.500px;height:22.300px">Анализ цен</div>
<div class="b" style="left:694px;top:780px;width:27.500px;height:22.300px"><svg><use href="#bc"/></svg></div>
<div class="b" style="left:740.800px;top:780px;width:87.800px;height:22.300px">Заполнить<i class="a"></i></div>
<div class="b" style="left:837px;top:780px;width:113px;height:22.300px;font-size:13px">Цены и скидки<i class="a"></i></div>
<div class="i" style="left:1367.600px;top:780px;width:241px;height:21.500px"><span class="s" style="left:220px"></span><span class="t" style="left:225px;top:9px;font-size:12px">×</span></div>
<span class="t" style="left:1370px;top:791px;color:#bbb;font-size:13px">Поиск (Ctrl+F)</span>
<div class="b" style="left:1617px;top:780px;width:56px;height:22.300px">Еще<i class="a"></i></div>

<table style="left:160.700px;top:810px;width:1512.700px">
<colgroup><col style="width:44px"><col style="width:150.400px"><col style="width:243.300px"><col style="width:150px"><col style="width:90.700px"><col style="width:127.400px"><col style="width:105.600px"><col style="width:99.500px"><col style="width:99.100px"><col style="width:99.100px"><col style="width:99.300px"><col style="width:99.400px"><col style="width:105px"></colgroup>
<tr style="height:25.900px"><th>N</th><th>Номенклатура постав...</th><th>Номенклатура</th><th>Назначение</th><th>Количество</th><th>Ед. изм.</th><th>Вид цены</th><th>Цена</th><th>Сумма</th><th>Ставка НДС</th><th>НДС</th><th>Сумма с НДС</th><th>Подразделен...</th></tr>
<tr class="u" style="height:24.670px"><td class="m">1</td><td class="h" style="background:#fbe6a2;color:#b6a877">&lt;выберите поставщи...</td><td>Штабелер гидравлический 2,0 т 3,0 м ...</td><td></td><td class="q">21,000</td><td>шт</td><td></td><td><i class="rl w"></i></td><td><i class="rl w"></i></td><td class="p">20%</td><td></td><td></td><td class="h">&lt;при списани...</td></tr>
<tr style="height:24.670px"><td class="m">2</td><td class="h">&lt;выберите поставщи...</td><td>Штабелер гидравлический 0,4 т 1,5 м ...</td><td></td><td class="q">2,000</td><td>шт</td><td></td><td><i class="rl w"></i></td><td><i class="rl w"></i></td><td class="p">20%</td><td></td><td></td><td class="h">&lt;при списани...</td></tr>
<tr style="height:24.670px"><td class="m">3</td><td class="h">&lt;выберите поставщи...</td><td>Штабелер гидравлический 0,5 т 1,6 м ...</td><td></td><td class="q">7,000</td><td>шт</td><td></td><td><i class="rl w"></i></td><td><i class="rl w"></i></td><td class="p">20%</td><td></td><td></td><td class="h">&lt;при списани...</td></tr>
<tr style="height:24.670px"><td class="m">4</td><td class="h">&lt;выберите поставщи...</td><td>Штабелер гидравлический 1,0 т 1,6 м ...</td><td></td><td class="q">25,000</td><td>шт</td><td></td><td><i class="rl w"></i></td><td><i class="rl w"></i></td><td class="p">20%</td><td></td><td></td><td class="h">&lt;при списани...</td></tr>
<tr style="height:24.670px"><td class="m">5</td><td class="h">&lt;выберите поставщи...</td><td>Штабелер гидравлический 1,5 т 3,0 м ...</td><td></td><td class="q">7,000</td><td>шт</td><td></td><td><i class="rl w"></i></td><td><i class="rl w"></i></td><td class="p">20%</td><td></td><td></td><td class="h">&lt;при списани...</td></tr>
<tr style="height:24.670px"><td class="m">6</td><td class="h">&lt;выберите поставщи...</td><td>Штабелер гидравлический 1,5 т 2,0 м ...</td><td></td><td class="q">13,000</td><td>шт</td><td></td><td><i class="rl w"></i></td><td><i class="rl w"></i></td><td class="p">20%</td><td></td><td></td><td class="h">&lt;при списани...</td></tr>
<tr style="height:24.670px"><td class="m">7</td><td class="h">&lt;выберите поставщи...</td><td>Штабелер гидравлический 1,5 т 2,5 м ...</td><td></td><td class="q">7,000</td><td>шт</td><td></td><td><i class="rl w"></i></td><td><i class="rl w"></i></td><td class="p">20%</td><td></td><td></td><td class="h">&lt;при списани...</td></tr>
<tr style="height:24.670px"><td class="m">8</td><td class="h">&lt;выберите поставщи...</td><td>Штабелер гидравлический 1,5 т 1,6 м ...</td><td></td><td class="q">42,000</td><td>шт</td><td></td><td><i class="rl w"></i></td><td><i class="rl w"></i></td><td class="p">20%</td><td></td><td></td><td class="h">&lt;при списани...</td></tr>
<tr style="height:24.670px"><td class="m">9</td><td class="h">&lt;выберите поставщи...</td><td>Штабелер гидравлический 2,0 т 2,0 м ...</td><td></td><td class="q">1,000</td><td>шт</td><td></td><td><i class="rl w"></i></td><td><i class="rl w"></i></td><td class="p">20%</td><td></td><td></td><td class="h">&lt;при списани...</td></tr>
<tr style="height:24.670px"><td class="m">10</td><td class="h">&lt;выберите поставщи...</td><td>Штабелер гидравлический 2,0 т 1,6 м ...</td><td></td><td class="q">11,000</td><td>шт</td><td></td><td><i class="rl w"></i></td><td><i class="rl w"></i></td><td class="p">20%</td><td></td><td></td><td class="h">&lt;при списани...</td></tr>
<tr style="height:24.670px"><td class="m">11</td><td class="h">&lt;выберите поставщи...</td><td>Штабелер гидравлический 2,0 т 1,6 м ...</td><td></td><td class="q">45,000</td><td>шт</td><td></td><td><i class="rl w"></i></td><td><i class="rl w"></i></td><td class="p">20%</td><td></td><td></td><td class="h">&lt;при списани...</td></tr>
<tr style="height:24.670px"><td class="m">12</td><td class="h">&lt;выберите поставщи...</td><td>Штабелер гидравлический 1,0 т 1,6 м ...</td><td></td><td class="q">18,000</td><td>шт</td><td></td><td><i class="rl w"></i></td><td><i class="rl w"></i></td><td class="p">20%</td><td></td><td></td><td class="h">&lt;при списани...</td></tr>
<tr style="height:24.670px"><td class="m">13</td><td class="h">&lt;выберите поставщи...</td><td>Штабелер гидравлический 0,5 т 1,6 м ...</td><td></td><td class="q">3,000</td><td>шт</td><td></td><td></td><td></td><td class="p">20%</td><td></td><td></td><td class="h">&lt;при списани...</td></tr>
</table>
<div class="x" style="left:160.700px;top:810px;width:1513px;height:340px;border:1px solid #ccc;box-sizing:border-box"></div>
</div>
</div>
</body></html>
